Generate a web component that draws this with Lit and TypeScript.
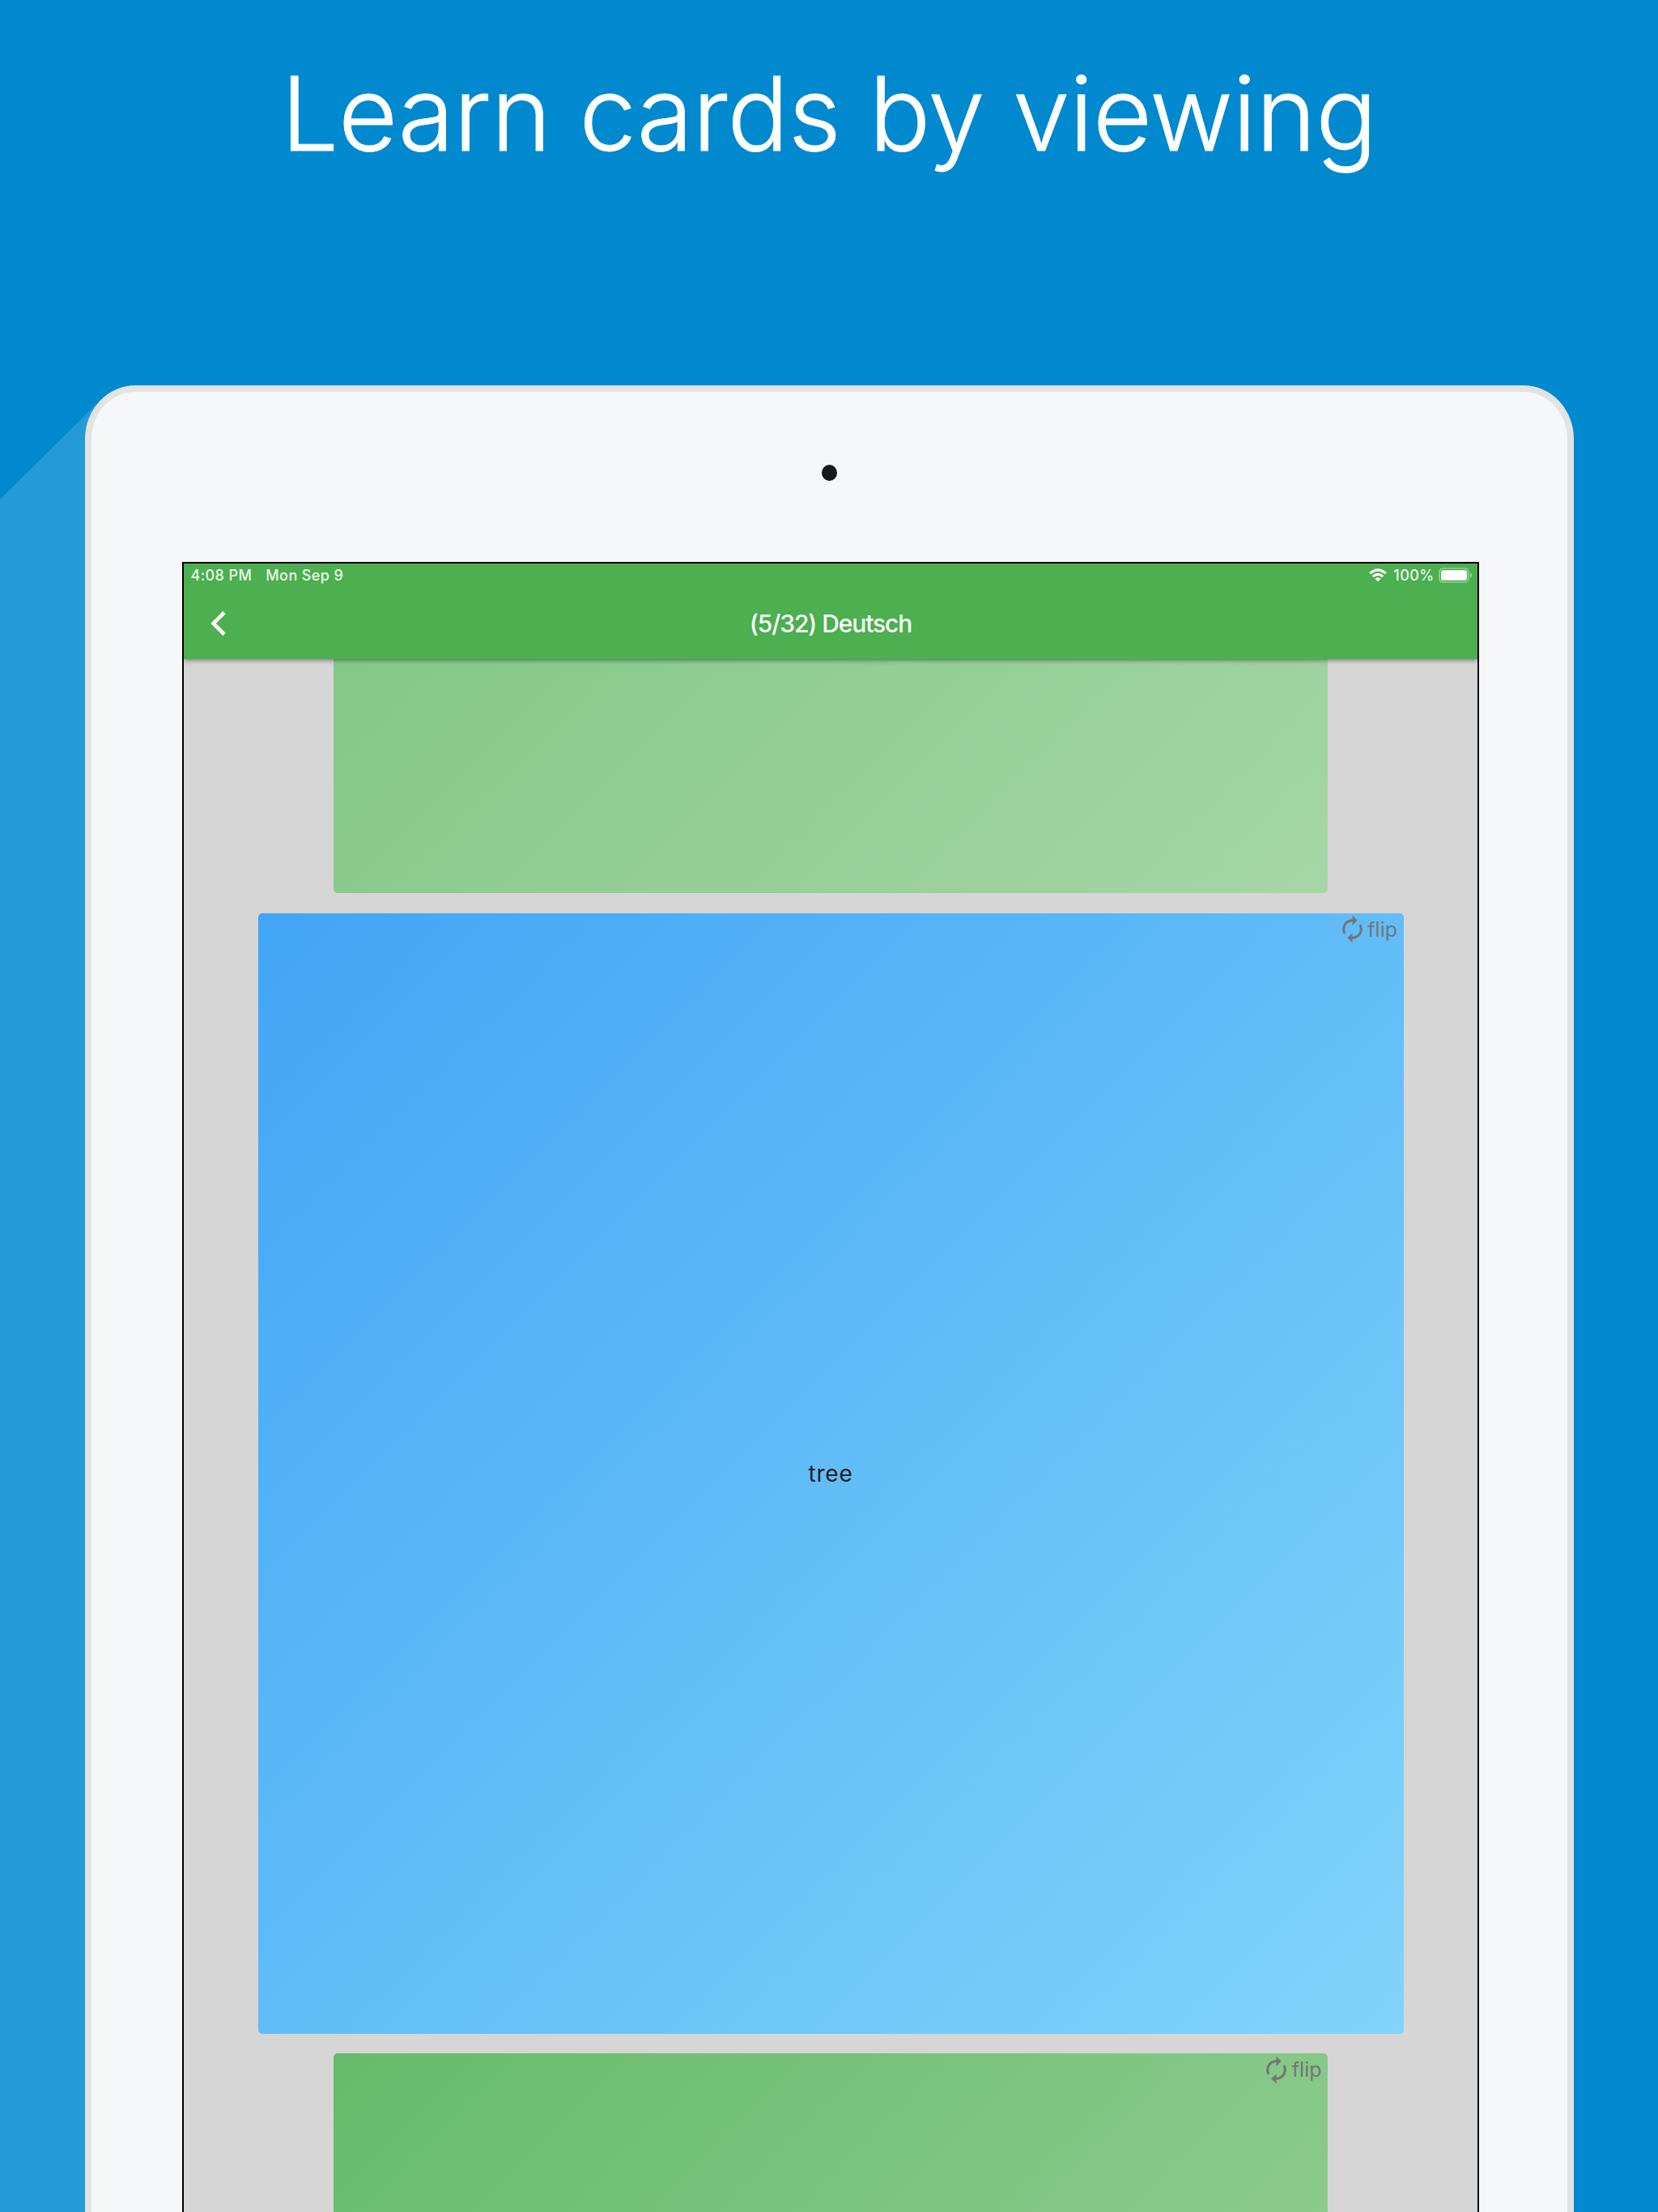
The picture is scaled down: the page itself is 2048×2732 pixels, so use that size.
import { LitElement, html, css, svg } from "lit";
import { customElement, property } from "lit/decorators.js";

@customElement("flash-card")
class FlashCard extends LitElement {
  @property() word = "";
  @property({ type: Boolean }) flip = false;

  static styles = css`
    :host { display: flex; flex-direction: column; box-sizing: border-box; border-radius: 5px; }
    .flip { display: flex; align-items: center; justify-content: flex-end; height: 40px; padding-right: 7.5px; color: #757575; font-size: 25px; letter-spacing: 0; }
    .label { padding-bottom: 0; }
    .icon { width: 37px; height: 37px; fill: #757575; margin-right: 0.5px; }
    .word { flex: 1; display: flex; align-items: center; justify-content: center; color: #212121; font-size: 28px; letter-spacing: 0.8px; padding-bottom: 39px; }
  `;

  render() {
    return html`
      ${this.flip
        ? html`<div class="flip">
            <svg class="icon" viewBox="0 0 24 24"><path d="M12 6v3l4-4-4-4v3c-4.42 0-8 3.58-8 8 0 1.57.46 3.03 1.24 4.26L6.7 14.8c-.45-.83-.7-1.79-.7-2.8 0-3.31 2.69-6 6-6zm6.76 1.74L17.3 9.2c.44.84.7 1.79.7 2.8 0 3.31-2.69 6-6 6v-3l-4 4 4 4v-3c4.42 0 8-3.58 8-8 0-1.57-.46-3.03-1.24-4.26z"/></svg>
            <span class="label">flip</span>
          </div>`
        : ""}
      ${this.word ? html`<div class="word"><span>${this.word}</span></div>` : ""}
    `;
  }
}

@customElement("app-root")
class AppRoot extends LitElement {
  static styles = css`
    :host { display: block; width: 2048px; height: 2732px; overflow: hidden; background: #0089cf; font-family: Inter, "Liberation Sans", sans-serif; }
    .page { position: relative; box-sizing: border-box; height: 2732px; display: flex; flex-direction: column; align-items: center; overflow: hidden; }
    .beam { position: absolute; left: 0; top: 476px; width: 200px; height: 2256px; }
    .title { height: 476px; flex: none; width: 100%; box-sizing: border-box; padding-top: 60px; text-align: center; color: #fff; font: 300 126px/160px Inter, sans-serif; letter-spacing: -0.4px; -webkit-text-stroke: 0.8px #fff; white-space: nowrap; }
    .tablet { position: relative; flex: none; box-sizing: border-box; width: 1839px; height: 2400px; margin-left: 1px; border: 8px solid #e1e3e5; border-radius: 62px / 66px; background: #f6f7f9; display: flex; flex-direction: column; align-items: center; }
    .camera { flex: none; margin-top: 90px; width: 19px; height: 20px; border-radius: 50%; background: #17181c; }
    .screen { flex: none; margin-top: 100px; margin-left: 3px; box-sizing: border-box; width: 1602px; height: 2200px; border: 2px solid #000; background: #d6d6d6; display: flex; flex-direction: column; }
    .head { position: relative; flex: none; height: 118px; background: #4caf50; color: #fff; box-shadow: 0 1px 6px rgba(0,0,0,.5); clip-path: inset(0 0 -12px 0); display: flex; flex-direction: column; }
    .status { display: flex; align-items: center; height: 29px; padding: 0 6.5px 0 8.5px; font-size: 18px; font-weight: 500; letter-spacing: 0.4px; color: #edf8ed; }
    .date { margin-left: 17px; flex: 1; }
    .wifi { width: 22px; height: 17px; margin-right: 8px; }
    .battery { width: 42px; height: 20px; margin-left: 5px; }
    .bar { display: grid; grid-template-columns: 100px 1fr 100px; align-items: center; height: 89px; }
    .back { width: 34px; height: 34px; margin-left: 26px; }
    .name { text-align: center; font-size: 30px; font-weight: 550; letter-spacing: -1.1px; }
    .deck { display: flex; flex-direction: column; align-items: center; gap: 24.5px; }
    .prev, .next { width: 1228px; background: linear-gradient(135deg, #66bb6a, #a5d6a7) top / 100% 1202px no-repeat; }
    .prev { height: 289px; border-radius: 0 0 5px 5px; background-image: linear-gradient(135deg, #70c074, #a5d6a7); background-position: bottom; }
    .current { width: 1415px; height: 1384px; background: linear-gradient(135deg, #42a5f5, #81d4fa); }
    .next { height: 400px; }
  `;

  render() {
    return html`
      <div class="page">
        <svg class="beam" viewBox="0 0 200 2256"><path d="M0 141 123 19 200 60V2256H0Z" fill="#269ad7"/></svg>
        <div class="title">Learn cards by viewing</div>
        <div class="tablet">
          <div class="camera"></div>
          <div class="screen">
            <div class="head">
              <div class="status">
                <span>4:08 PM</span><span class="date">Mon Sep 9</span>
                <svg class="wifi" viewBox="0 0 22 17">${svg`<g fill="none" stroke="#fff" stroke-width="3"><path d="M1.3 6.2Q11-2.4 20.7 6.2"/><path d="M4.8 10.1Q11 4.6 17.2 10.1"/></g><path d="M7.4 12.8Q11 9.7 14.6 12.8L11 16.5Z" fill="#fff"/>`}</svg>
                <span>100%</span>
                <svg class="battery" viewBox="0 0 42 20"><rect x="1" y="1" width="36" height="17" rx="4.5" fill="none" stroke="#94cf96" stroke-width="1.7"/><rect x="3" y="3.2" width="32" height="12.6" rx="2.5" fill="#fff"/><path d="M39 6.5Q41.5 7.3 41.5 9.5T39 12.5Z" fill="#94cf96"/></svg>
              </div>
              <div class="bar">
                <svg class="back" viewBox="0 0 34 34"><path d="M24 3.5 10.5 17 24 30.5" fill="none" stroke="#fff" stroke-width="4.6"/></svg>
                <div class="name">(5/32) Deutsch</div>
              </div>
            </div>
            <div class="deck">
              <flash-card class="prev"></flash-card>
              <flash-card class="current" flip word="tree"></flash-card>
              <flash-card class="next" flip></flash-card>
            </div>
          </div>
        </div>
      </div>
    `;
  }
}
